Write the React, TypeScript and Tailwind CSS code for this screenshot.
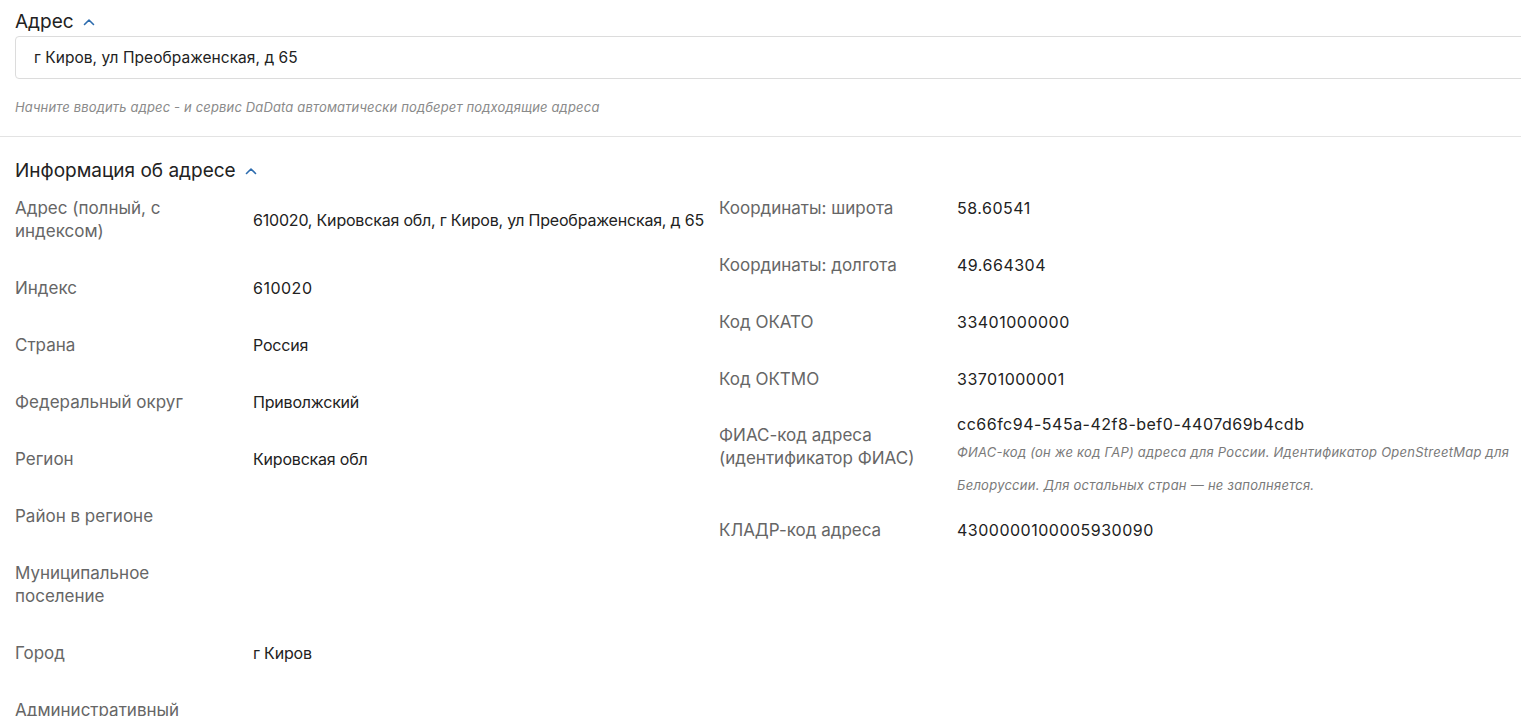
import React from "react";

const Chevron = () => (
  <svg width="12" height="8" viewBox="0 0 12 8" fill="none" className="ml-[9px] mt-[1px]">
    <path d="M1.5 6.5L6 2L10.5 6.5" stroke="#2d6cae" strokeWidth="1.6" strokeLinecap="round" strokeLinejoin="round" />
  </svg>
);

type Row = { label: React.ReactNode; value?: React.ReactNode; num?: boolean };

const leftRows: Row[] = [
  { label: <>Адрес (полный, с<br />индексом)</>, value: "610020, Кировская обл, г Киров, ул Преображенская, д 65" },
  { label: "Индекс", value: "610020", num: true },
  { label: "Страна", value: "Россия" },
  { label: "Федеральный округ", value: "Приволжский" },
  { label: "Регион", value: "Кировская обл" },
  { label: "Район в регионе" },
  { label: <>Муниципальное<br />поселение</> },
  { label: "Город", value: "г Киров" },
  { label: "Административный" },
];

const rightRows: Row[] = [
  { label: "Координаты: широта", value: "58.60541", num: true },
  { label: "Координаты: долгота", value: "49.664304", num: true },
  { label: "Код ОКАТО", value: "33401000000", num: true },
  { label: "Код ОКТМО", value: "33701000001", num: true },
];

function InfoRow({ label, value, num }: Row) {
  return (
    <div className="flex items-center py-[17px]">
      <div className="w-[238px] shrink-0 text-[17px] leading-[23px] text-[#666666]">{label}</div>
      <div
        className={
          num
            ? "text-[16px] leading-[23px] text-[#222222] tracking-[0.5px]"
            : "text-[16px] leading-[23px] text-[#222222] tracking-[-0.2px]"
        }
      >
        {value}
      </div>
    </div>
  );
}

export default function App() {
  return (
    <div className="h-screen w-full overflow-hidden bg-white" style={{ fontFamily: "Inter, 'Noto Sans', sans-serif" }}>
      <div className="pl-[15px]">
        <div className="flex items-center pt-[9px] h-[33px] text-[19px] leading-[23px] text-[#222222]">
          <span>Адрес</span>
          <Chevron />
        </div>
        <div className="mt-[3px] h-[43px] w-[calc(100%+20px)] rounded-[4px] border border-[#dcdcdc] flex items-center pl-[18px] text-[15.5px] tracking-[0.05px] text-[#222222]">
          г Киров, ул Преображенская, д 65
        </div>
        <div className="mt-[19px] text-[13px] italic leading-[18px] tracking-[0.15px] text-[#8a8a8a]">
          Начните вводить адрес - и сервис DaData автоматически подберет подходящие адреса
        </div>
      </div>
      <div className="mt-[20px] border-t border-[#e3e3e3]" />
      <div className="pl-[15px]">
        <div className="flex items-center pt-[22px] leading-[23px] text-[19px] text-[#222222]">
          <span>Информация об адресе</span>
          <Chevron />
        </div>
        <div className="flex mt-[-2px]">
          <div className="w-[704px] shrink-0">
            {leftRows.map((r, i) => (
              <InfoRow key={i} {...r} />
            ))}
          </div>
          <div className="flex-1">
            {rightRows.map((r, i) => (
              <InfoRow key={i} {...r} />
            ))}
            <div className="flex items-start">
              <div className="w-[238px] shrink-0 pt-[16px] text-[17px] leading-[23px] text-[#666666]">
                ФИАС-код адреса<br />(идентификатор ФИАС)
              </div>
              <div className="pt-[5px]">
                <div className="text-[16px] leading-[23px] tracking-[0.5px] text-[#222222]">cc66fc94-545a-42f8-bef0-4407d69b4cdb</div>
                <div className="text-[13px] italic leading-[33px] tracking-[0.25px] text-[#7a7a7a] max-w-[560px]">
                  ФИАС-код (он же код ГАР) адреса для России. Идентификатор OpenStreetMap для Белоруссии. Для остальных стран — не заполняется.
                </div>
              </div>
            </div>
            <InfoRow label="КЛАДР-код адреса" value="4300000100005930090" num />
          </div>
        </div>
      </div>
    </div>
  );
}
